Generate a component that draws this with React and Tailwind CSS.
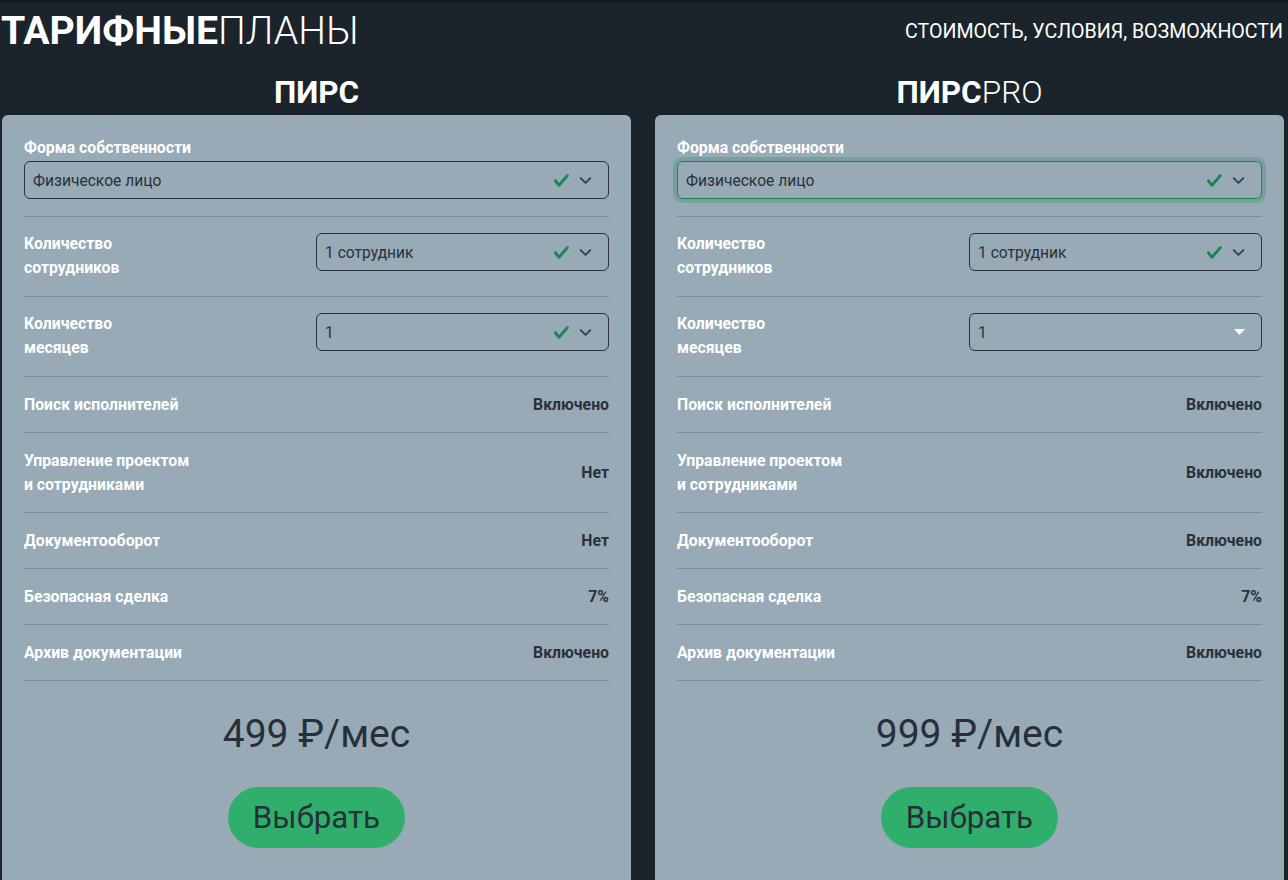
import React from "react";

function Check() {
  return (
    <svg width="17" height="17" viewBox="0 0 8 8" className="shrink-0">
      <path fill="#198754" d="M2.3 6.73.6 4.53c-.4-1.04.46-1.4 1.1-.8l1.1 1.4 3.4-3.8c.6-.63 1.6-.27 1.2.7l-4 4.6c-.43.5-.8.4-1.1.1z" />
    </svg>
  );
}

function Chevron() {
  return (
    <svg width="13" height="13" viewBox="0 0 16 16" className="shrink-0">
      <path fill="none" stroke="#343a40" strokeLinecap="round" strokeLinejoin="round" strokeWidth="2" d="m2 5 6 6 6-6" />
    </svg>
  );
}

function Caret() {
  return (
    <svg width="11" height="6" viewBox="0 0 11 6" className="shrink-0">
      <path fill="#ffffff" d="M0 0h11L5.5 6z" />
    </svg>
  );
}

function Select({ value, focus, plain }) {
  return (
    <div
      className={
        "h-[38px] w-full flex items-center pl-[8px] pr-[16px] rounded-[6px] border " +
        (focus
          ? "border-[#198754] shadow-[0_0_0_4px_rgba(25,135,84,0.25)]"
          : "border-[#2a323a]")
      }
    >
      <span className="flex-1 pt-[3px] text-[15.6px] text-[#29313a] leading-none">{value}</span>
      {plain ? (
        <Caret />
      ) : (
        <div className="flex items-center gap-[9px]">
          <Check />
          <Chevron />
        </div>
      )}
    </div>
  );
}

function SelectRow({ label, value, plain }) {
  return (
    <div className="flex items-start pt-[15px] pb-[16px] border-b border-[#7c8c98]">
      <div className="w-[292px] text-[15.8px] font-bold text-white leading-[24px]">{label}</div>
      <div className="flex-1 mt-[1px]">
        <Select value={value} plain={plain} />
      </div>
    </div>
  );
}

function InfoRow({ label, value, multi }) {
  return (
    <div className="flex items-center justify-between pt-[16px] pb-[16px] border-b border-[#7c8c98]">
      <div className={"text-[15.8px] font-bold text-white " + (multi ? "leading-[23.5px]" : "leading-[23px]")}>{label}</div>
      <div className="text-[15.8px] font-bold text-[#2b3138] leading-[23px]">{value}</div>
    </div>
  );
}

function Card({ pro, values, price, focusFirst, plainMonths }) {
  return (
    <div className="flex flex-col">
      <div className="h-[53px] pt-[9px] flex items-center justify-center text-[31.5px] text-white leading-none">
        <span className="font-bold">ПИРС</span>
        {pro && <span className="font-light">PRO</span>}
      </div>
      <div className="bg-[#98aab5] rounded-[6px] px-[22px] pt-[23px] pb-[40px] min-h-[780px]">
        <div className="pb-[17px] border-b border-[#7c8c98]">
          <div className="text-[15.8px] font-bold text-white leading-[20px] mb-[3px]">Форма собственности</div>
          <Select value="Физическое лицо" focus={focusFirst} />
        </div>
        <SelectRow label={<>Количество<br />сотрудников</>} value="1 сотрудник" />
        <SelectRow label={<>Количество<br />месяцев</>} value="1" plain={plainMonths} />
        <InfoRow label="Поиск исполнителей" value={values[0]} />
        <InfoRow multi label={<>Управление проектом<br />и сотрудниками</>} value={values[1]} />
        <InfoRow label="Документооборот" value={values[2]} />
        <InfoRow label="Безопасная сделка" value={values[3]} />
        <InfoRow label="Архив документации" value={values[4]} />
        <div className="pt-[31px] text-center text-[39px] leading-[44px] text-[#27303a]">{price}</div>
        <div className="flex justify-center mt-[31px]">
          <button className="bg-[#2fae6c] rounded-full px-[25px] py-[10px] text-[31.3px] leading-[41px] text-[#27303a]">
            Выбрать
          </button>
        </div>
      </div>
    </div>
  );
}

export default function App() {
  return (
    <div className="h-[880px] overflow-hidden bg-[#1b242a] border-t-2 border-[#141a1e] font-['Roboto',sans-serif]">
      <header className="h-[60px] flex items-center justify-between pl-[1px] pr-[5px]">
        <h1 className="text-[39.2px] leading-none text-white">
          <span className="font-bold">ТАРИФНЫЕ</span>
          <span className="font-light">ПЛАНЫ</span>
        </h1>
        <div className="text-[19.6px] text-white">СТОИМОСТЬ, УСЛОВИЯ, ВОЗМОЖНОСТИ</div>
      </header>
      <div className="grid grid-cols-2 gap-6 pl-[2px] pr-[4px]">
        <Card
          values={["Включено", "Нет", "Нет", "7%", "Включено"]}
          price="499 ₽/мес"
        />
        <Card
          pro
          focusFirst
          plainMonths
          values={["Включено", "Включено", "Включено", "7%", "Включено"]}
          price="999 ₽/мес"
        />
      </div>
    </div>
  );
}
